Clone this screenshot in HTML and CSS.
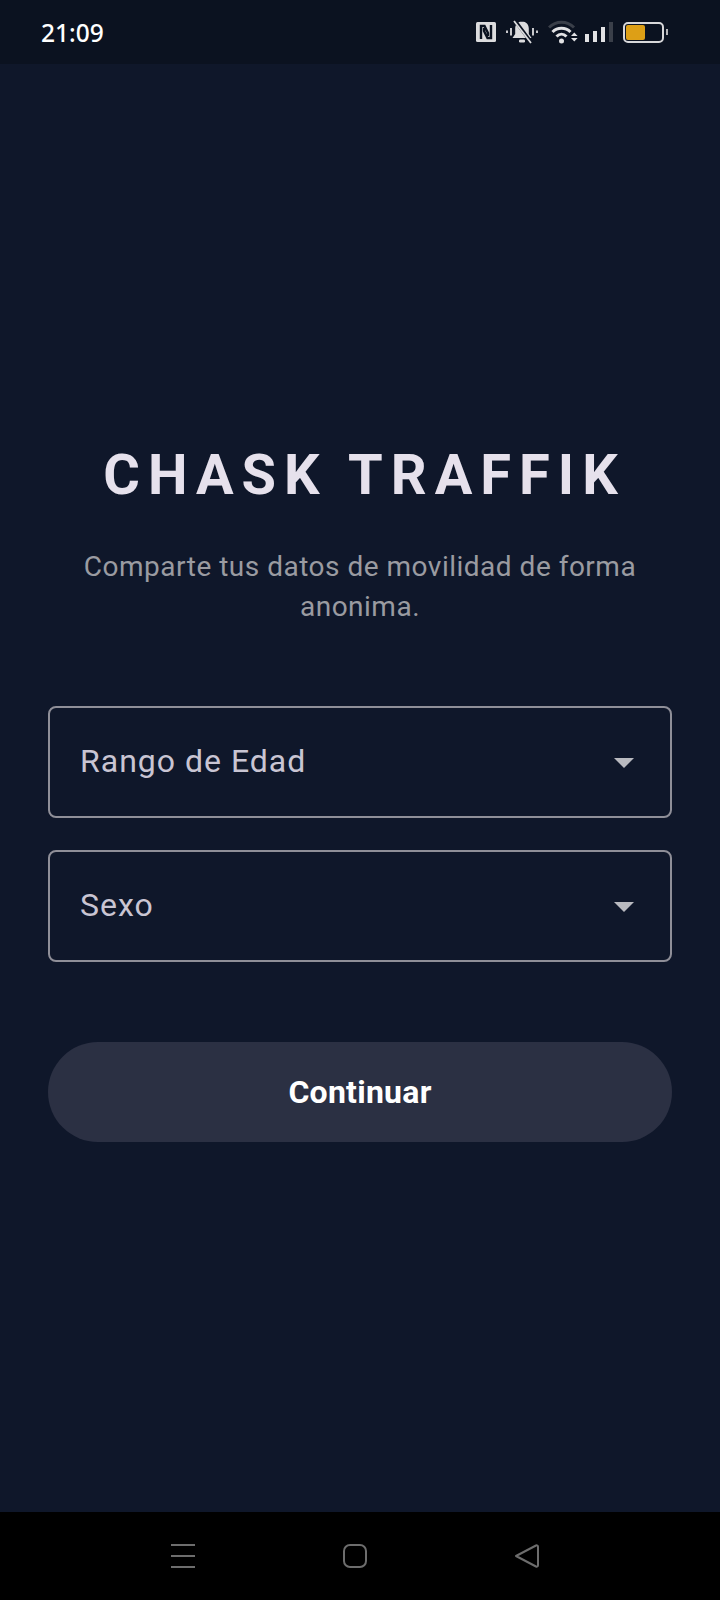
FILE: index.html
```html
<!DOCTYPE html>
<html lang="es">
<head>
    <meta charset="UTF-8">
    <title>Chask Traffik</title>
    <link rel="stylesheet" href="styles.css">
</head>
<body>
    <header class="status-bar">
        <span class="clock">21:09</span>
        <div class="status-icons">
            <svg class="icon-nfc" width="20" height="20" viewBox="0 0 20 20">
                <rect width="20" height="20" rx="1.500" fill="#dcdcde"/>
                <path d="M5 17V4h3.500l3.500 7V14M15 3v13h-3.500L8 9V6" fill="none" stroke="#0b1220" stroke-width="2.400"/>
            </svg>
            <svg class="icon-bell" width="32" height="24" viewBox="0 0 32 24">
                <path d="M16 1.500c-4.200 0-6.800 3-6.800 7v5.500L6.500 18h19l-2.700-4V8.500c0-4-2.600-7-6.800-7z" fill="#dcdcde"/>
                <rect x="13" y="19.500" width="6" height="3" rx="1.200" fill="#dcdcde"/>
                <path d="M8.500 0l16.500 22" stroke="#0b1220" stroke-width="3.500"/>
                <path d="M8 1l17 22" stroke="#dcdcde" stroke-width="1.800"/>
                <path d="M1 10.500v2.500M31 10.500v2.500M5 8v7.500M27 8v7.500" stroke="#dcdcde" stroke-width="1.800"/>
            </svg>
            <svg class="icon-wifi" width="30" height="24" viewBox="0 0 30 24">
                <path d="M1 7.500C8 .5 19 .5 26 7.500" fill="none" stroke="#3a3f49" stroke-width="3"/>
                <path d="M4.500 12c5-5 13-5 18 0" fill="none" stroke="#e2e2e4" stroke-width="3"/>
                <path d="M8.500 16.500c3-3 7-3 10 0" fill="none" stroke="#e2e2e4" stroke-width="3"/>
                <circle cx="13.500" cy="21" r="2.500" fill="#e2e2e4"/>
                <path d="M23 16l3.300-3.500 3.300 3.500zM23 18l3.300 3.500 3.300-3.500z" fill="#e2e2e4"/>
            </svg>
            <div class="signal">
                <span class="bar bar-1"></span>
                <span class="bar bar-2"></span>
                <span class="bar bar-3"></span>
                <span class="bar bar-4"></span>
            </div>
            <div class="battery">
                <div class="battery-body"><div class="battery-level"></div></div>
                <div class="battery-tip"></div>
            </div>
        </div>
    </header>

    <main class="content">
        <h1 class="title">CHASK TRAFFIK</h1>
        <p class="subtitle">Comparte tus datos de movilidad de forma anonima.</p>

        <div class="select-box">
            <span class="select-label">Rango de Edad</span>
            <span class="caret"></span>
        </div>
        <div class="select-box">
            <span class="select-label">Sexo</span>
            <span class="caret"></span>
        </div>

        <button class="continue-btn">Continuar</button>
    </main>

    <nav class="nav-bar">
        <svg width="24" height="24" viewBox="0 0 24 24">
            <path d="M0 1h24M0 12h24M0 23h24" stroke="#6d6d6d" stroke-width="2"/>
        </svg>
        <svg width="24" height="24" viewBox="0 0 24 24">
            <rect x="1" y="1" width="22" height="22" rx="6" fill="none" stroke="#6d6d6d" stroke-width="2"/>
        </svg>
        <svg width="24" height="24" viewBox="0 0 24 24">
            <path d="M1 12L21 1.500c1-.4 2 .2 2 1.200v18.600c0 1-1 1.600-2 1.200z" fill="none" stroke="#6d6d6d" stroke-width="2" stroke-linejoin="round"/>
        </svg>
    </nav>
</body>
</html>
```

FILE: styles.css
```css
*, *::before, *::after {
    box-sizing: border-box;
}

html, body {
    width: 100%;
    height: 100%;
    margin: 0;
}
body {
    display: flex;
    flex-direction: column;
    height: 1600px;
    background: #0f172a;
    font-family: Roboto, sans-serif;
    overflow: hidden;
}

.status-bar {
    flex: 0 0 64px;
    display: flex;
    align-items: center;
    justify-content: space-between;
    padding: 0 52px 0 41px;
    background: #0b1220;
}
.clock {
    color: #ffffff;
    font-family: "Noto Sans", sans-serif;
    font-size: 24.500px;
    font-weight: 500;
}
.status-icons {
    display: flex;
    align-items: center;
    gap: 10px;
}
.signal {
    display: flex;
    align-items: flex-end;
    gap: 4px;
    height: 20px;
    margin-left: -3px;
}
.bar {
    width: 4px;
    background: #e2e2e4;
}
.bar-1 { height: 8px; }
.bar-2 { height: 11px; }
.bar-3 { height: 15px; }
.bar-4 { height: 20px; background: #3a3f49; }

.battery {
    display: flex;
    align-items: center;
}
.battery-body {
    width: 41px;
    height: 21px;
    padding: 1px;
    border: 2px solid #d8d8da;
    border-radius: 5px;
}
.battery-level {
    width: 19px;
    height: 100%;
    background: #dd9f16;
    border-radius: 2px;
}
.battery-tip {
    width: 2px;
    height: 6px;
    margin-left: 2px;
    background: #b5b5b8;
}

.content {
    flex: 1;
    display: flex;
    flex-direction: column;
    padding: 377px 48px 0;
}
.title {
    margin: 0;
    padding-left: 9px;
    color: #e6e1ec;
    font-size: 56px;
    font-weight: 700;
    letter-spacing: 8px;
    line-height: 68px;
    text-align: center;
    white-space: nowrap;
}
.subtitle {
    margin: 38px 0 79px;
    color: #9a9ba1;
    font-size: 28px;
    letter-spacing: 0.500px;
    line-height: 40px;
    text-align: center;
}
.select-box {
    display: flex;
    align-items: center;
    justify-content: space-between;
    height: 112px;
    margin-bottom: 32px;
    padding: 0 36px 0 30px;
    border: 2px solid #8f8f98;
    border-radius: 8px;
    color: #c9c5d3;
    font-size: 32px;
    letter-spacing: 1px;
}
.select-label {
    margin-bottom: 2px;
}
.caret {
    width: 0;
    height: 0;
    margin-top: 1px;
    border-left: 10px solid transparent;
    border-right: 10px solid transparent;
    border-top: 10px solid #b9bac0;
}
.continue-btn {
    height: 100px;
    margin-top: 48px;
    border: none;
    border-radius: 50px;
    background: #2b3043;
    color: #ffffff;
    font-family: Roboto, sans-serif;
    font-size: 32px;
    font-weight: 700;
    letter-spacing: 0.250px;
}

.nav-bar {
    flex: 0 0 88px;
    display: flex;
    align-items: center;
    justify-content: space-between;
    padding: 0 181px 0 171px;
    background: #000000;
}
```
